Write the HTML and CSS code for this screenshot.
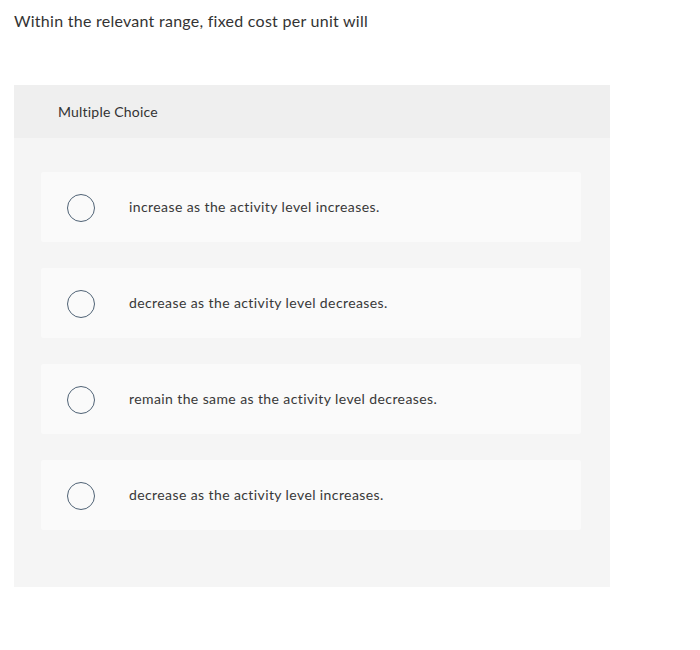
FILE: index.html
```html
<!DOCTYPE html>
<html>
<head>
<meta charset="utf-8">
<link rel="stylesheet" href="styles.css">
</head>
<body>
<div class="page">
  <p class="question">Within the relevant range, fixed cost per unit will</p>
  <div class="panel">
    <div class="panel-header">Multiple Choice</div>
    <div class="panel-body">
      <div class="option"><span class="radio"></span><span class="label">increase as the activity level increases.</span></div>
      <div class="option"><span class="radio"></span><span class="label">decrease as the activity level decreases.</span></div>
      <div class="option"><span class="radio"></span><span class="label">remain the same as the activity level decreases.</span></div>
      <div class="option"><span class="radio"></span><span class="label">decrease as the activity level increases.</span></div>
    </div>
  </div>
</div>
</body>
</html>
```
FILE: styles.css
```css
html, body {
  margin: 0;
  padding: 0;
  background: #ffffff;
}
body {
  font-family: Lato, "Open Sans", sans-serif;
  color: #222222;
}
.page {
  padding: 11px 0 0 14px;
}
.question {
  margin: 0;
  font-size: 16px;
  line-height: 20px;
  letter-spacing: 0.26px;
  color: #333333;
}
.panel {
  margin-top: 54px;
  width: 596px;
  background: #f5f5f5;
}
.panel-header {
  background: #efefef;
  height: 53px;
  box-sizing: border-box;
  padding: 18px 0 0 44px;
  font-size: 14px;
  line-height: 18px;
  letter-spacing: 0.2px;
  color: #333333;
}
.panel-body {
  padding: 34px 29px 57px 27px;
  display: flex;
  flex-direction: column;
  gap: 26px;
}
.option {
  background: #fafafa;
  height: 70px;
  display: flex;
  align-items: center;
  border-radius: 2px;
}
.radio {
  width: 26px;
  height: 26px;
  border: 1.6px solid #4f6275;
  border-radius: 50%;
  margin-left: 26px;
  margin-top: 1px;
  flex: none;
}
.label {
  margin-left: 34px;
  margin-bottom: 2px;
  font-size: 14px;
  letter-spacing: 0.4px;
  color: #383838;
}
```
